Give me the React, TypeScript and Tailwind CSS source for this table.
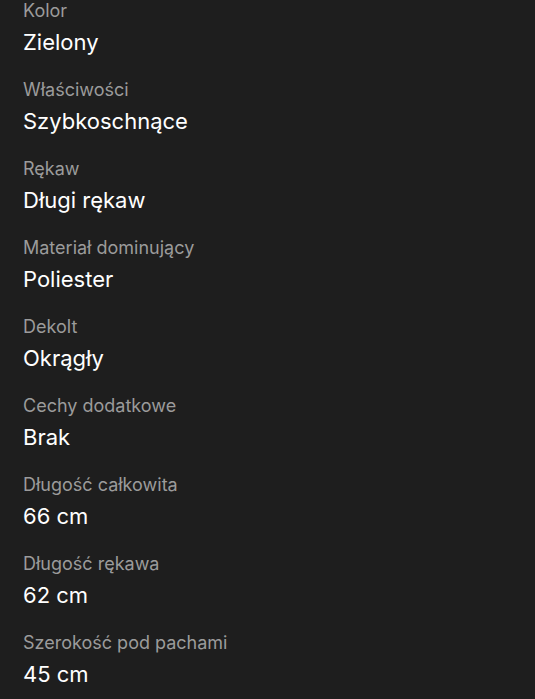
const specs: Array<{ label: string; value: string }> = [
  { label: "Kolor", value: "Zielony" },
  { label: "Właściwości", value: "Szybkoschnące" },
  { label: "Rękaw", value: "Długi rękaw" },
  { label: "Materiał dominujący", value: "Poliester" },
  { label: "Dekolt", value: "Okrągły" },
  { label: "Cechy dodatkowe", value: "Brak" },
  { label: "Długość całkowita", value: "66 cm" },
  { label: "Długość rękawa", value: "62 cm" },
  { label: "Szerokość pod pachami", value: "45 cm" },
];

export default function App() {
  return (
    <main
      className="min-h-[699px] w-full overflow-hidden bg-[#1e1e1e] px-[23px]"
      style={{ fontFamily: "Inter, 'Noto Sans', sans-serif" }}
    >
      <dl className="flex flex-col gap-[23px]">
        {specs.map((spec) => (
          <div key={spec.label}>
            <dt className="text-[18px] leading-[22px] text-[#9b9b9b]">{spec.label}</dt>
            <dd className="mt-[6px] text-[22px] leading-[28px] text-white">{spec.value}</dd>
          </div>
        ))}
      </dl>
    </main>
  );
}
